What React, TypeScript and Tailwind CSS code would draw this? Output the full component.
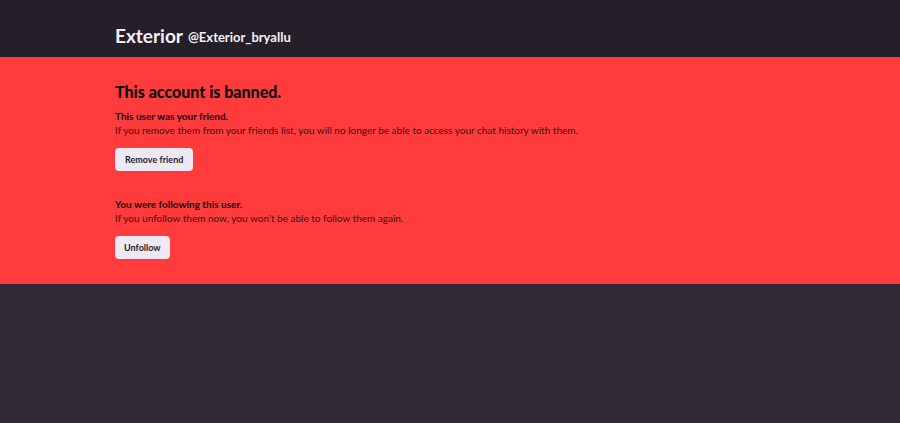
export default function App() {
  return (
    <div className="min-h-[423px] bg-[#2e2935] flex flex-col" style={{ fontFamily: "Lato, 'Noto Sans', sans-serif" }}>
      <header className="h-[57px] bg-[#241f28] flex items-end pb-[12px] px-[115px]">
        <div className="flex items-baseline gap-[5px]">
          <span className="text-[19px] font-bold text-[#f4f0f8] leading-none">Exterior</span>
          <span className="text-[13px] font-bold text-[#f4f0f8] leading-none relative -top-[1px]">@Exterior_bryallu</span>
        </div>
      </header>
      <section className="bg-[#ff3b3c] h-[227px] px-[115px] pt-[25px]">
        <h1 className="text-[16px] font-black text-[#0d0d0d] leading-[20px]">This account is banned.</h1>
        <div className="mt-[8px]">
          <div className="text-[10px] font-bold text-[#0d0d0d] leading-[13px]">This user was your friend.</div>
          <p className="text-[10px] text-[#3a1115] leading-[13px] mt-[1px]">
            If you remove them from your friends list, you will no longer be able to access your chat history with them.
          </p>
          <button className="mt-[11px] h-[23px] px-[10px] rounded-[4px] bg-[#ede8f2] text-[9px] font-bold text-[#241f28]">
            Remove friend
          </button>
        </div>
        <div className="mt-[27px]">
          <div className="text-[10px] font-bold text-[#0d0d0d] leading-[13px]">You were following this user.</div>
          <p className="text-[10px] text-[#3a1115] leading-[13px] mt-[1px]">
            If you unfollow them now, you won't be able to follow them again.
          </p>
          <button className="mt-[11px] h-[23px] px-[9px] rounded-[4px] bg-[#ede8f2] text-[9px] font-bold text-[#241f28]">
            Unfollow
          </button>
        </div>
      </section>
      <div className="flex-1" />
    </div>
  );
}
